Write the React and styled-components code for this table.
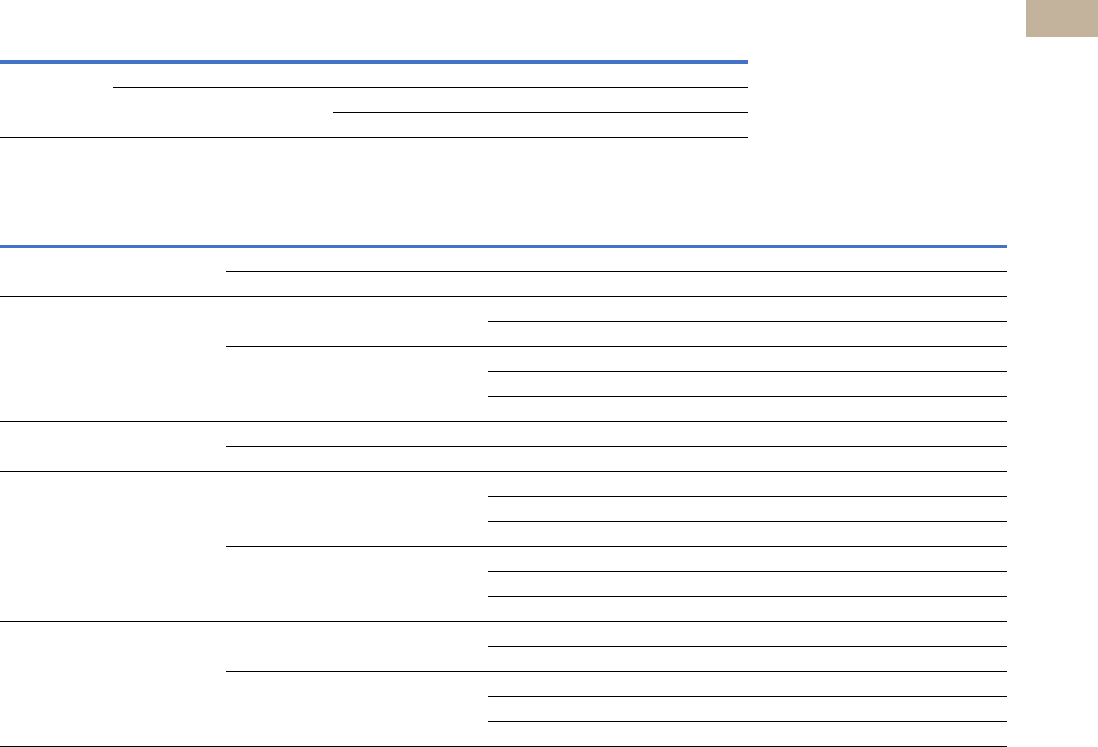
import React from "react";
import styled, { createGlobalStyle } from "styled-components";

const topLayout = {
  widths: [113, 220, 415],
  groups: [[1, 2]],
};

const mainLayout = {
  widths: [226, 262, 519],
  groups: [
    [1, 1],
    [2, 3],
    [1, 1],
    [3, 3],
    [2, 3],
  ],
};

const SpecTable = ({ layout, rule }) => {
  const [w1, w2, w3] = layout.widths;
  return (
    <Table $width={w1 + w2 + w3} $rule={rule}>
      {layout.groups.map((group, gi) => (
        <Group key={gi}>
          <Cell $width={w1} />
          <SubList>
            {group.map((span, si) => (
              <SubGroup key={si}>
                <Cell $width={w2} />
                <RowList>
                  {Array.from({ length: span }).map((_, ri) => (
                    <Row key={ri} />
                  ))}
                </RowList>
              </SubGroup>
            ))}
          </SubList>
        </Group>
      ))}
    </Table>
  );
};

const App = () => {
  return (
    <>
      <GlobalStyle />
      <Page>
        <Main>
          <SpecTable layout={topLayout} rule={4} />
          <Spacer />
          <SpecTable layout={mainLayout} rule={3} />
        </Main>
        <Aside>
          <Tab />
        </Aside>
      </Page>
    </>
  );
};

const GlobalStyle = createGlobalStyle`
  html, body {
    margin: 0;
    padding: 0;
    background: #fff;
    font-family: "Liberation Sans", Arial, sans-serif;
  }
  * {
    box-sizing: border-box;
  }
`;

const Page = styled.div`
  display: flex;
  width: 1098px;
  height: 747px;
  overflow: hidden;
`;

const Main = styled.div`
  flex: 1;
  padding-top: 60px;
`;

const Aside = styled.div`
  width: 72px;
`;

const Tab = styled.div`
  height: 37px;
  background: #c3b39c;
`;

const Spacer = styled.div`
  height: 107px;
`;

const Table = styled.div`
  width: ${(p) => p.$width}px;
  border-top: ${(p) => p.$rule}px solid #4472c4;
  display: flex;
  flex-direction: column;
  & > :first-child {
    margin-top: -1px;
  }
`;

const Group = styled.div`
  display: flex;
`;

const Cell = styled.div`
  width: ${(p) => p.$width}px;
  flex-shrink: 0;
  border-bottom: 1px solid #000;
`;

const SubList = styled.div`
  flex: 1;
  display: flex;
  flex-direction: column;
`;

const SubGroup = styled.div`
  display: flex;
`;

const RowList = styled.div`
  flex: 1;
  display: flex;
  flex-direction: column;
`;

const Row = styled.div`
  height: 25px;
  border-bottom: 1px solid #000;
`;

export default App;
